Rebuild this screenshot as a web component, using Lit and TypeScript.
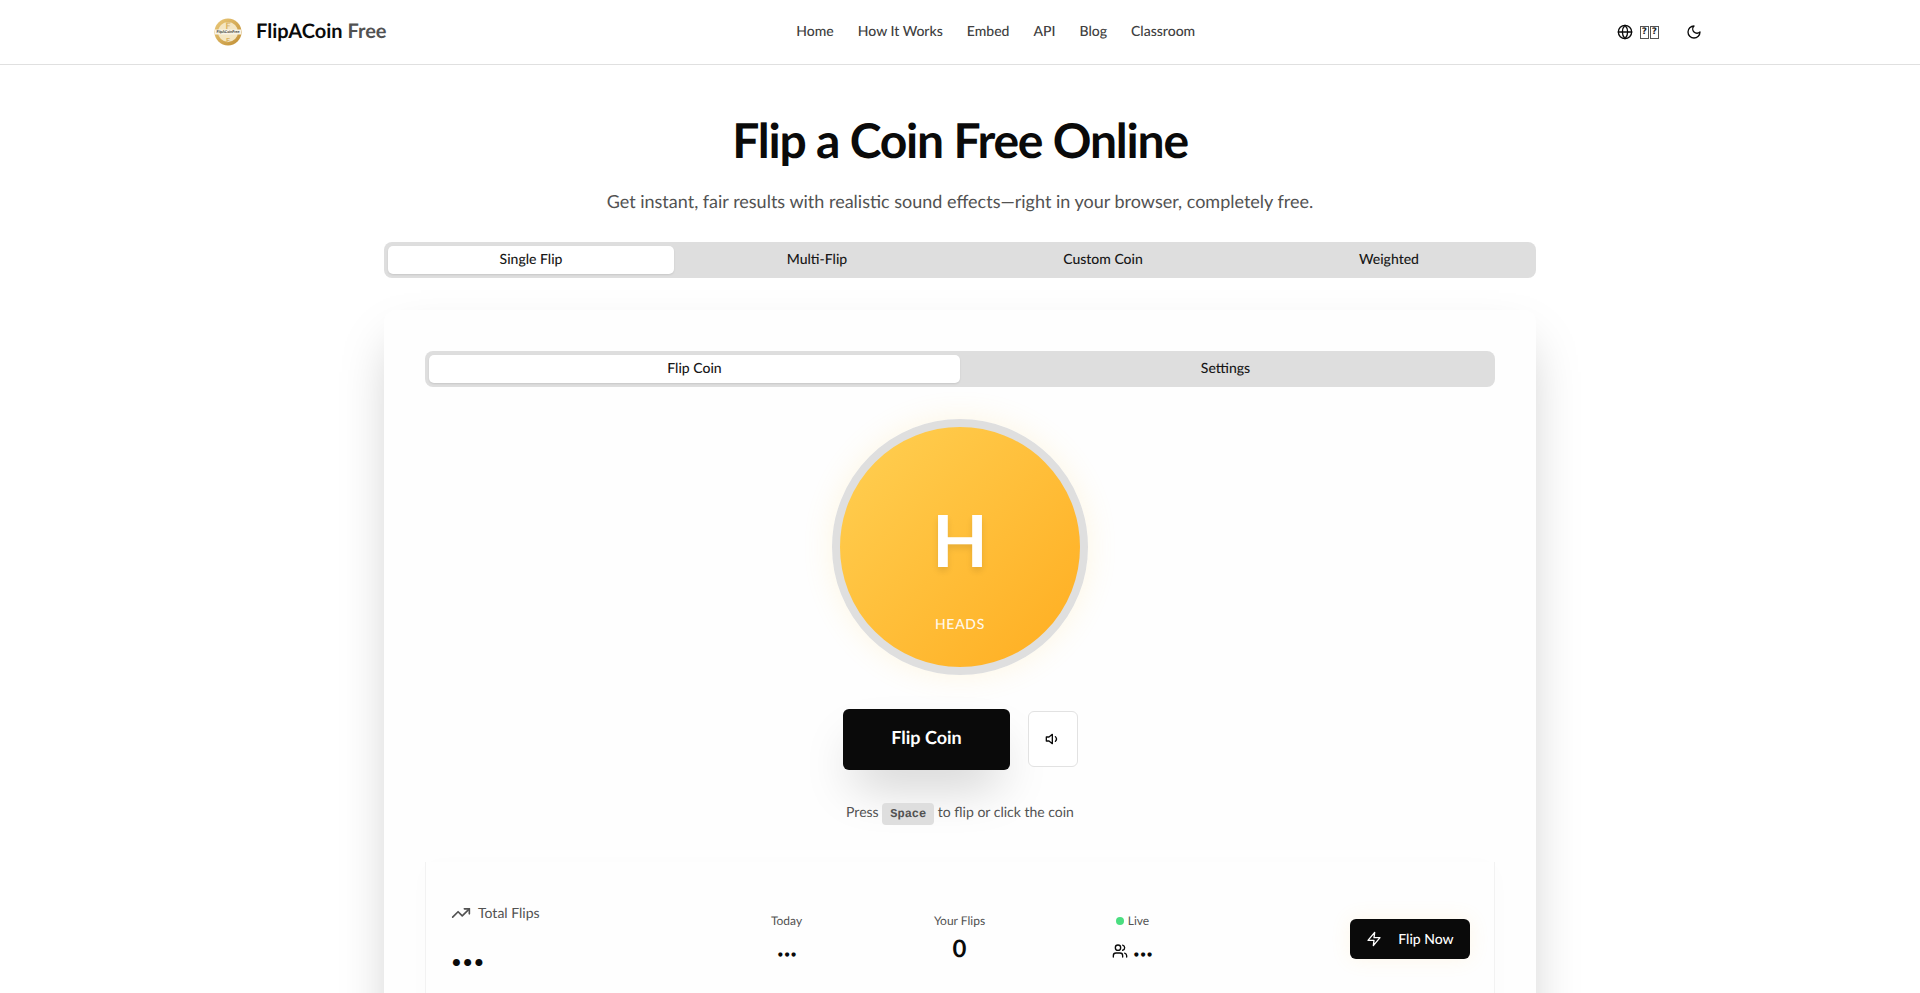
import { LitElement, html, css, svg } from "lit";
import { customElement } from "lit/decorators.js";

const icon = (size: number, body: unknown, width = 2) => html`<svg
  class="icon"
  width=${size}
  height=${size}
  viewBox="0 0 24 24"
  fill="none"
  stroke="currentColor"
  stroke-width=${width}
  stroke-linecap="round"
  stroke-linejoin="round"
>${body}</svg>`;

const globe = svg`<circle cx="12" cy="12" r="10"/><path d="M12 2a14.5 14.5 0 0 0 0 20 14.5 14.5 0 0 0 0-20"/><path d="M2 12h20"/>`;
const moon = svg`<path d="M12 3a6 6 0 0 0 9 9 9 9 0 1 1-9-9Z"/>`;
const volume = svg`<polygon points="11 5 6 9 2 9 2 15 6 15 11 19 11 5"/><path d="M15.54 8.46a5 5 0 0 1 0 7.07"/>`;
const trending = svg`<polyline points="22 7 13.5 15.5 8.5 10.5 2 17"/><polyline points="16 7 22 7 22 13"/>`;
const users = svg`<path d="M16 21v-2a4 4 0 0 0-4-4H6a4 4 0 0 0-4 4v2"/><circle cx="9" cy="7" r="4"/><path d="M22 21v-2a4 4 0 0 0-3-3.87"/><path d="M16 3.13a4 4 0 0 1 0 7.75"/>`;
const zap = svg`<polygon points="13 2 3 14 12 14 11 22 21 10 12 10 13 2"/>`;

@customElement("app-root")
export class AppRoot extends LitElement {
  static styles = css`
    :host {
      display: block;
      height: 993px;
      overflow: hidden;
      background: #fff;
      color: #0a0a0a;
      font-family: Lato, "Liberation Sans", sans-serif;
      text-rendering: geometricPrecision;
    }
    .icon {
      display: block;
      flex: none;
    }

    header {
      height: 64px;
      box-sizing: content-box;
      border-bottom: 1px solid #e0e0e0;
      padding: 0 218px 0 214px;
      display: flex;
      align-items: center;
      justify-content: space-between;
    }
    .brand {
      display: flex;
      align-items: center;
      gap: 14px;
      font-size: 20px;
      line-height: 28px;
      font-weight: 700;
    }
    .brand .name {
      position: relative;
      top: -1px;
    }
    .brand span {
      color: #525252;
    }
    .logo {
      width: 28px;
      height: 28px;
      display: block;
    }
    nav {
      display: flex;
      gap: 24px;
      font-size: 14px;
      line-height: 20px;
      font-weight: 500;
      color: #404040;
      padding-bottom: 3px;
    }
    .tools {
      display: flex;
      align-items: center;
      gap: 27px;
      padding-left: 12px;
    }
    .lang {
      display: flex;
      align-items: center;
      gap: 7px;
    }
    .box {
      display: flex;
      gap: 1px;
    }
    .box i {
      width: 9px;
      height: 13px;
      border: 1px solid #555;
      box-sizing: border-box;
      font: 700 9px/11px "DejaVu Sans", sans-serif;
      text-align: center;
      color: #222;
    }

    main {
      width: 1152px;
      margin: 0 auto;
      padding-top: 46px;
    }
    h1 {
      margin: 0;
      text-align: center;
      font-size: 48px;
      line-height: 60px;
      font-weight: 700;
      letter-spacing: -1.2px;
    }
    .sub {
      margin: 16px 0 0;
      text-align: center;
      font-size: 18px;
      line-height: 28px;
      color: #525252;
    }

    .tabs {
      display: grid;
      background: #dedede;
      border-radius: 8px;
      padding: 4px;
      height: 36px;
      box-sizing: border-box;
      font-size: 14px;
      font-weight: 500;
      color: #171717;
    }
    .tabs.four {
      grid-template-columns: repeat(4, 1fr);
      margin-top: 27px;
    }
    .tabs.two {
      grid-template-columns: repeat(2, 1fr);
    }
    .tabs div {
      display: flex;
      align-items: center;
      justify-content: center;
      border-radius: 5px;
      padding-bottom: 3px;
    }
    .tabs .on {
      background: #fff;
      box-shadow: 0 1px 2px rgba(0, 0, 0, 0.1);
    }

    .card {
      margin-top: 32px;
      padding: 41px 41px 0;
      height: 700px;
      background: #fefefe;
      border-radius: 12px;
      box-shadow: 0 25px 50px -12px rgba(0, 0, 0, 0.25);
    }
    .coin {
      width: 256px;
      height: 256px;
      box-sizing: border-box;
      margin: 32px auto 0;
      border: 8px solid #dfdfdf;
      border-radius: 50%;
      background: linear-gradient(135deg, #ffd053, #ffad20);
      box-shadow: 0 0 30px rgba(255, 205, 80, 0.16);
      display: flex;
      flex-direction: column;
      align-items: center;
      color: #fff;
    }
    .coin b {
      margin-top: 73px;
      font-size: 72px;
      line-height: 80px;
      font-weight: 700;
      text-shadow: 0 4px 6px rgba(0, 0, 0, 0.1);
    }
    .coin small {
      margin-top: 34px;
      font-size: 14px;
      line-height: 20px;
      font-weight: 500;
      letter-spacing: 0.7px;
      opacity: 0.9;
    }

    .actions {
      margin-top: 34px;
      padding-left: 1px;
      display: flex;
      justify-content: center;
      align-items: center;
      gap: 18px;
    }
    .flip {
      width: 167px;
      height: 61px;
      padding-bottom: 5px;
      box-sizing: border-box;
      background: #0a0a0a;
      color: #fff;
      border-radius: 6px;
      display: flex;
      align-items: center;
      justify-content: center;
      font-size: 18px;
      font-weight: 700;
      box-shadow: 0 25px 50px -12px rgba(0, 0, 0, 0.22);
    }
    .mute {
      width: 50px;
      height: 56px;
      margin-bottom: 2px;
      box-sizing: border-box;
      background: #fff;
      border: 1px solid #e2e2e2;
      border-radius: 6px;
      display: flex;
      align-items: center;
      justify-content: center;
    }
    .hint {
      margin-top: 31px;
      height: 22px;
      text-align: center;
      font-size: 14px;
      line-height: 22px;
      color: #525252;
    }
    kbd {
      display: inline-block;
      background: #dedede;
      border-radius: 4px;
      padding: 0 8px;
      font: 700 12px/22px "Liberation Mono", monospace;
      color: #525252;
    }

    .stats {
      margin-top: 39px;
      height: 200px;
      box-sizing: border-box;
      padding: 41px 24px 0 25px;
      border: solid #f2f2f2;
      border-width: 0 1px;
      box-shadow: 0 4px 24px rgba(0, 0, 0, 0.015);
      display: grid;
      grid-template-columns: 1fr 519px 1fr;
      align-items: start;
    }
    .total .label {
      display: flex;
      align-items: center;
      gap: 7px;
      font-size: 14px;
      line-height: 20px;
      color: #525252;
    }
    .dots {
      font-weight: 700;
      line-height: 1;
      font-family: "DejaVu Sans", sans-serif;
    }
    .total .dots {
      margin-top: 30px;
      font-size: 20px;
      letter-spacing: -1.5px;
      margin-left: -1px;
    }
    .mid {
      display: grid;
      grid-template-columns: repeat(3, 1fr);
      padding-top: 10px;
      margin-left: -1px;
      margin-right: 1px;
      text-align: center;
    }
    .mid .cap {
      font-size: 12px;
      line-height: 16px;
      color: #525252;
    }
    .mid .val {
      margin-top: 7px;
      height: 24px;
      display: flex;
      align-items: center;
      justify-content: center;
      gap: 4px;
    }
    .mid .val.low {
      margin-top: 10px;
    }
    .mid .val.low .dots {
      font-size: 12px;
      letter-spacing: -1px;
      padding-top: 8px;
    }
    .mid .num {
      font-size: 24px;
      font-weight: 700;
    }
    .live {
      display: flex;
      align-items: center;
      justify-content: center;
      gap: 4px;
    }
    .live i {
      width: 8px;
      height: 8px;
      border-radius: 50%;
      background: #4ade80;
    }
    .now {
      justify-self: end;
      width: 120px;
      height: 40px;
      margin-top: 16px;
      padding-bottom: 1px;
      box-sizing: border-box;
      background: #0a0a0a;
      color: #fff;
      border-radius: 6px;
      display: flex;
      align-items: center;
      justify-content: center;
      gap: 16px;
      font-size: 14px;
      font-weight: 500;
      box-shadow: 0 0 20px rgba(255, 200, 80, 0.12);
    }
  `;

  render() {
    return html`
      <header>
        <div class="brand">
          <svg class="logo" viewBox="0 0 28 28">
            <defs>
              <linearGradient id="gold" x1="0" y1="0" x2="1" y2="1">
                <stop offset="0" stop-color="#eccb7c" />
                <stop offset="1" stop-color="#bf8d33" />
              </linearGradient>
            </defs>
            <circle cx="14" cy="14" r="13.5" fill="url(#gold)" />
            <circle cx="14" cy="14" r="10" fill="#f4e6c3" />
            <text x="14" y="11" text-anchor="middle" font-size="9" font-weight="700" fill="#d9b25e">F</text>
            <text x="14" y="25" text-anchor="middle" font-size="7" font-weight="700" fill="#d9b25e">F</text>
            <rect x="1" y="11.5" width="26" height="5" fill="#f8f3e6" />
            <text x="14" y="15.4" text-anchor="middle" font-size="3.7" font-weight="700" fill="#333">FlipACoinFree</text>
          </svg>
          <div class="name">FlipACoin <span>Free</span></div>
        </div>
        <nav>
          <div>Home</div>
          <div>How It Works</div>
          <div>Embed</div>
          <div>API</div>
          <div>Blog</div>
          <div>Classroom</div>
        </nav>
        <div class="tools">
          <div class="lang">
            ${icon(16, globe)}
            <div class="box"><i>?</i><i>?</i></div>
          </div>
          ${icon(16, moon)}
        </div>
      </header>
      <main>
        <h1>Flip a Coin Free Online</h1>
        <p class="sub">Get instant, fair results with realistic sound effects—right in your browser, completely free.</p>
        <div class="tabs four">
          <div class="on">Single Flip</div>
          <div>Multi-Flip</div>
          <div>Custom Coin</div>
          <div>Weighted</div>
        </div>
        <section class="card">
          <div class="tabs two">
            <div class="on">Flip Coin</div>
            <div>Settings</div>
          </div>
          <div class="coin">
            <b>H</b>
            <small>HEADS</small>
          </div>
          <div class="actions">
            <div class="flip">Flip Coin</div>
            <div class="mute">${icon(16, volume)}</div>
          </div>
          <div class="hint">Press <kbd>Space</kbd> to flip or click the coin</div>
          <div class="stats">
            <div class="total">
              <div class="label">${icon(20, trending)}Total Flips</div>
              <div class="dots">•••</div>
            </div>
            <div class="mid">
              <div>
                <div class="cap">Today</div>
                <div class="val low"><span class="dots">•••</span></div>
              </div>
              <div>
                <div class="cap">Your Flips</div>
                <div class="val"><span class="num">0</span></div>
              </div>
              <div>
                <div class="cap live"><i></i>Live</div>
                <div class="val low">${icon(16, users)}<span class="dots">•••</span></div>
              </div>
            </div>
            <div class="now">${icon(16, zap)}Flip Now</div>
          </div>
        </section>
      </main>
    `;
  }
}
